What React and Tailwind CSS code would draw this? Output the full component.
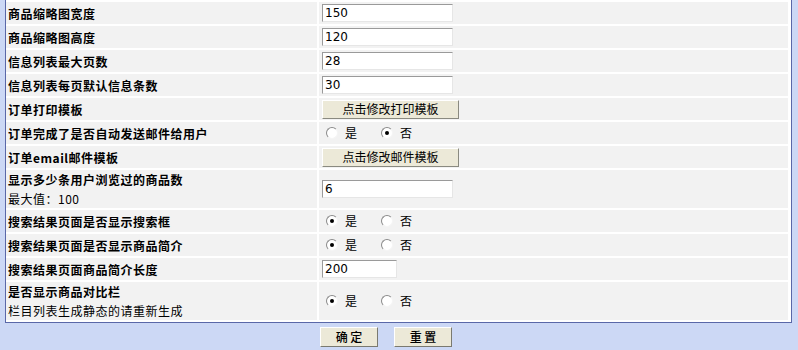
import React from 'react';

const rows = [
  { label: '商品缩略图宽度', type: 'input', value: '150' },
  { label: '商品缩略图高度', type: 'input', value: '120' },
  { label: '信息列表最大页数', type: 'input', value: '28' },
  { label: '信息列表每页默认信息条数', type: 'input', value: '30' },
  { label: '订单打印模板', type: 'button', value: '点击修改打印模板' },
  { label: '订单完成了是否自动发送邮件给用户', type: 'radio', value: false },
  { label: '订单email邮件模板', type: 'button', value: '点击修改邮件模板' },
  { label: '显示多少条用户浏览过的商品数', note: '最大值：100', type: 'input', value: '6' },
  { label: '搜索结果页面是否显示搜索框', type: 'radio', value: true },
  { label: '搜索结果页面是否显示商品简介', type: 'radio', value: true },
  { label: '搜索结果页面商品简介长度', type: 'input', value: '200', short: true },
  { label: '是否显示商品对比栏', note: '栏目列表生成静态的请重新生成', type: 'radio', value: true },
];

function Radio({ checked }) {
  return (
    <span className="w-[12px] h-[12px] rounded-full bg-white border border-t-[#8a8a8a] border-l-[#8a8a8a] border-b-[#f4f4f4] border-r-[#f4f4f4] flex items-center justify-center">
      {checked && <span className="w-[4px] h-[4px] rounded-full bg-black" />}
    </span>
  );
}

function Field({ row }) {
  if (row.type === 'input') {
    return (
      <div
        className={`h-[18px] bg-white border border-t-[#9a9a9a] border-l-[#9a9a9a] border-b-[#e6e6e6] border-r-[#e6e6e6] flex items-center pl-[2px] text-[12px] font-['DejaVu_Sans',sans-serif] text-black ${
          row.short ? 'w-[75px]' : 'w-[131px]'
        }`}
      >
        {row.value}
      </div>
    );
  }
  if (row.type === 'button') {
    return (
      <div className="w-[137px] h-[19px] bg-[#ece9d8] border border-t-white border-l-white border-b-[#8a8a80] border-r-[#8a8a80] flex items-center justify-center text-[12px] text-black">
        {row.value}
      </div>
    );
  }
  return (
    <div className="flex items-center text-[12px] text-black pl-[4px]">
      <Radio checked={row.value} />
      <span className="ml-[7px]">是</span>
      <span className="ml-[24px]"><Radio checked={!row.value} /></span>
      <span className="ml-[7px]">否</span>
    </div>
  );
}

export default function App() {
  return (
    <div className="w-[798px] h-[350px] bg-[#ccd8f5] overflow-hidden font-['Noto_Sans_CJK_SC',sans-serif]">
      <div className="ml-[5px] w-[787px] bg-white border-x border-b border-[#5a68a8] pt-[2px] pb-[2px] flex flex-col gap-[2px]">
        {rows.map((row) => (
          <div
            key={row.label}
            className={`grid grid-cols-[311px_1fr] gap-x-[2px] ${row.note ? 'h-[38px]' : 'h-[22px]'}`}
          >
            <div className="bg-[#f2f2f2] pl-[2px] flex flex-col justify-center text-[12px] leading-[19px] text-black">
              <span className="font-bold tracking-[0.5px]">{row.label}</span>
              {row.note && <span className="tracking-[0.5px]">{row.note}</span>}
            </div>
            <div className="bg-[#f2f2f2] pl-[3px] mr-[3px] flex items-center">
              <Field row={row} />
            </div>
          </div>
        ))}
      </div>
      <div className="flex pl-[320px] pt-[4px] gap-[16px]">
        <div className="w-[58px] h-[20px] bg-[#ece9d8] border border-t-white border-l-white border-b-[#7a7a70] border-r-[#7a7a70] flex items-center justify-center text-[12px] font-medium text-black">
          确 定
        </div>
        <div className="w-[58px] h-[20px] bg-[#ece9d8] border border-t-white border-l-white border-b-[#7a7a70] border-r-[#7a7a70] flex items-center justify-center text-[12px] font-medium text-black">
          重 置
        </div>
      </div>
    </div>
  );
}
